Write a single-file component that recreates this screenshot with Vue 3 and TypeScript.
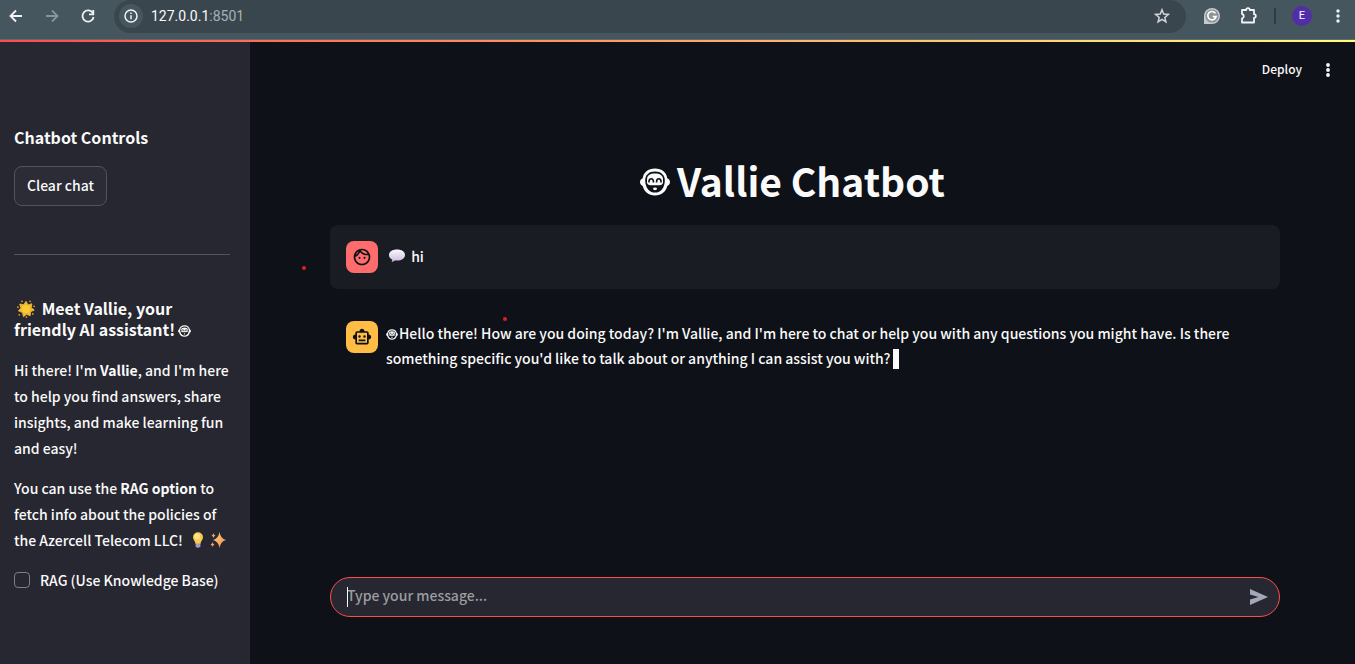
<script setup lang="ts">
import { ref } from 'vue'

const draft = ref('')
const useRag = ref(false)
const showGreeting = ref(true)

function clearChat() {
  showGreeting.value = false
}

function send() {
  draft.value = ''
}
</script>

<template>
  <svg class="defs" aria-hidden="true">
    <symbol id="vallie-face" viewBox="0 0 30 28">
      <path d="M15 .5C22 .5 26.600 4.600 27.300 10.200c1.800.7 2.700 2.200 2.700 3.900s-.9 3.200-2.700 3.900C26 23.600 21.500 27.500 15 27.500S4 23.600 2.700 18C.9 17.300 0 15.800 0 14.100s.9-3.200 2.700-3.900C3.400 4.600 8 .5 15 .5Z" fill="currentColor" />
      <path d="M15 3.600c6 0 9.800 3.400 9.800 8.800 0 7-4 12.200-9.800 12.200S5.200 19.400 5.200 12.400C5.200 7 9 3.600 15 3.600Z" class="face-hole" />
      <path d="M7 11.500C7 7.500 10 5.600 15 5.600s8 1.900 8 5.900v2.700c0 2-1.500 3-3.500 3h-9c-2 0-3.500-1-3.500-3Z" fill="currentColor" />
      <path d="M9 14.500v-1.300c.4-3.200 4-3.200 4.400 0v1.300M16.600 14.500v-1.300c.4-3.200 4-3.200 4.400 0v1.300" class="face-line" />
      <ellipse cx="15" cy="20.800" rx="2" ry="1.400" fill="currentColor" />
    </symbol>
  </svg>

  <div class="window">
    <header class="browser">
      <button class="tool back" aria-label="Back">
        <svg width="16" height="16" viewBox="0 0 16 16"><path d="M14 8H3M8 2.500 2.500 8 8 13.500" /></svg>
      </button>
      <button class="tool forward" aria-label="Forward">
        <svg width="16" height="16" viewBox="0 0 16 16"><path d="M2 8h11M8 2.500 13.500 8 8 13.500" /></svg>
      </button>
      <button class="tool reload" aria-label="Reload">
        <svg width="16" height="16" viewBox="0 0 16 16"><path d="M13 5.300A5.600 5.600 0 1 0 13.600 9" /><path d="M13.300 2v4.300H9" /></svg>
      </button>
      <div class="address">
        <button class="info" aria-label="Site information">
          <svg width="14" height="14" viewBox="0 0 14 14"><circle cx="7" cy="7" r="6" /><path d="M7 6.300V10.300M7 3.600V5" /></svg>
        </button>
        <span class="url">127.0.0.1<span class="port">:8501</span></span>
        <button class="star" aria-label="Bookmark">
          <svg width="16" height="16" viewBox="0 0 16 16"><path d="m8 1.800 1.700 4.300 4.600.3-3.500 3 1.100 4.500L8 11.400l-3.900 2.500 1.100-4.500-3.500-3 4.600-.3Z" /></svg>
        </button>
      </div>
      <button class="tool grammar" aria-label="Grammar">
        <svg width="16" height="16" viewBox="0 0 16 16"><path d="M8 0a8 8 0 1 1 0 16H0V8a8 8 0 0 1 8-8Z" fill="#c5c9cb" stroke="none" /><circle cx="8" cy="8" r="6.600" fill="#8d9598" stroke="none" /><path d="M11.500 5.300A4.200 4.200 0 1 0 12.100 8.600H8.800" stroke="#fff" stroke-width="1.600" fill="none" /></svg>
      </button>
      <button class="tool puzzle" aria-label="Extensions">
        <svg width="18" height="18" viewBox="0 0 18 18"><path d="M2 3h4.200a1.800 1.800 0 0 1 3.600 0H14v4.200a1.800 1.800 0 0 1 0 3.600V15.500H2v-4a2.300 2.300 0 0 0 0-4.500Z" stroke-linejoin="round" /></svg>
      </button>
      <span class="divider"></span>
      <button class="profile" aria-label="Profile">E</button>
      <button class="tool dots" aria-label="Browser menu">
        <svg width="4" height="16" viewBox="0 0 4 16"><circle cx="2" cy="3" r="1.700" /><circle cx="2" cy="8" r="1.700" /><circle cx="2" cy="13" r="1.700" /></svg>
      </button>
    </header>
    <div class="decoration"></div>

    <div class="app">
      <aside class="sidebar">
        <h2>Chatbot Controls</h2>
        <button class="clear" @click="clearChat">Clear chat</button>
        <hr />
        <h3>
          <svg class="emoji sun" viewBox="0 0 20 20"><path d="m10 1.500 2.300 4 4.200-1.300-.7 4.300 3.400 2.700-4.100 1.800-.5 4.500-3.900-1.600-3.500 2.600-1.100-4.500L1.500 12l3-3L3 4.500l4.500.8Z" fill="#efb92f" stroke="#efb92f" stroke-linejoin="round" /><circle cx="10" cy="10" r="4.500" fill="#f9cb3a" /><g fill="#dba32a"><circle cx="5.500" cy="1.500" r="1" /><circle cx="14.500" cy="1.500" r="1" /><circle cx="19" cy="7" r="1" /><circle cx="17.500" cy="15.500" r="1" /><circle cx="10.500" cy="19" r="1" /><circle cx="2.500" cy="16.500" r="1" /><circle cx="1" cy="8" r="1" /></g></svg>
          Meet Vallie, your<br />friendly AI assistant!<svg class="face face-heading"><use href="#vallie-face" /></svg>
        </h3>
        <p>Hi there! I'm <b>Vallie</b>, and I'm here<br />to help you find answers, share<br />insights, and make learning fun<br />and easy!</p>
        <p>
          You can use the <b>RAG option</b> to<br />fetch info about the policies of<br />the Azercell Telecom LLC!
          <svg class="emoji bulb" viewBox="0 0 16 16"><path d="M8 .3a5 5 0 0 0-5 5C3 8 5.300 9 5.600 12h4.800C10.700 9 13 8 13 5.300a5 5 0 0 0-5-5Z" fill="#ffc84a" /><ellipse cx="7.200" cy="4.500" rx="2.800" ry="3" fill="#ffe58b" /><path d="M5.600 11.500h4.800v2.700L9 15.800H7l-1.400-1.600Z" fill="#a995bd" /></svg>
          <svg class="emoji sparkle" viewBox="0 0 16 16"><defs><linearGradient id="spark" x1="0" y1="0" x2="1" y2="1"><stop offset="0" stop-color="#ffd27a" /><stop offset="1" stop-color="#f28b4b" /></linearGradient></defs><path d="M9.500 0Q10.500 6.500 16 8q-5.500 1.500-6.500 8Q8.500 9.500 3 8 8.500 6.500 9.500 0Z" fill="url(#spark)" /><path d="M3.500 1q.4 2 2 2.500-1.600.5-2 2.500-.4-2-2-2.500 1.600-.5 2-2.500ZM2.500 10q.4 2 2 2.500-1.600.5-2 2.500-.4-2-2-2.500 1.600-.5 2-2.500Z" fill="#f3a06a" /></svg>
        </p>
        <label class="rag"><input v-model="useRag" type="checkbox" /><span>RAG (Use Knowledge Base)</span></label>
      </aside>

      <main class="main">
        <nav class="top">
          <button class="deploy">Deploy</button>
          <button class="menu" aria-label="Main menu">
            <svg width="4" height="14" viewBox="0 0 4 14"><circle cx="2" cy="2" r="1.900" /><circle cx="2" cy="7" r="1.900" /><circle cx="2" cy="12" r="1.900" /></svg>
          </button>
        </nav>
        <h1><svg class="face face-title"><use href="#vallie-face" /></svg>Vallie Chatbot</h1>

        <section class="message user">
          <i class="mark mark-left"></i>
          <span class="avatar avatar-user">
            <svg width="20" height="20" viewBox="0 0 24 24"><path d="M10.250 13a1.250 1.250 0 1 1-2.500 0 1.250 1.250 0 0 1 2.500 0ZM15 11.750a1.250 1.250 0 1 0 0 2.500 1.250 1.250 0 0 0 0-2.500ZM22 12c0 5.520-4.480 10-10 10S2 17.520 2 12 6.480 2 12 2s10 4.480 10 10ZM10.660 4.120C12.060 6.440 14.600 8 17.500 8c.46 0 .91-.05 1.340-.12C17.440 5.560 14.900 4 12 4c-.46 0-.91.050-1.340.12ZM4.420 9.470a8.046 8.046 0 0 0 3.660-4.440 8.046 8.046 0 0 0-3.660 4.440ZM20 12c0-.78-.12-1.530-.33-2.240-.7.150-1.420.24-2.170.24a9.974 9.974 0 0 1-7.760-3.690A10.016 10.016 0 0 1 4 11.860c.010.040 0 .090 0 .140 0 4.410 3.590 8 8 8s8-3.590 8-8Z" /></svg>
          </span>
          <p>
            <svg class="emoji speech" viewBox="0 0 18 16"><defs><linearGradient id="bubble" x1="0" y1="0" x2="0" y2="1"><stop offset="0" stop-color="#fbf8ff" /><stop offset="1" stop-color="#c9bddd" /></linearGradient></defs><path d="M9 1.500c4.700 0 8 2.200 8 5.500s-3.300 5.600-8 5.600c-.9 0-1.700 0-2.400-.2-.8.900-2 1.500-3.200 1.400.7-.6 1-1.300.9-2.100C2.200 10.700 1 9.100 1 7c0-3.300 3.300-5.500 8-5.500Z" fill="url(#bubble)" /></svg>
            hi
          </p>
        </section>

        <section v-if="showGreeting" class="message">
          <i class="mark mark-top"></i>
          <span class="avatar avatar-bot">
            <svg width="20" height="20" viewBox="0 0 24 24"><path d="M20 9V7c0-1.100-.9-2-2-2h-3c0-1.660-1.340-3-3-3S9 3.340 9 5H6c-1.100 0-2 .9-2 2v2c-1.660 0-3 1.340-3 3s1.340 3 3 3v4c0 1.100.9 2 2 2h12c1.100 0 2-.9 2-2v-4c1.660 0 3-1.340 3-3s-1.340-3-3-3Zm-2 10H6V7h12v12ZM9 13a1.500 1.500 0 1 1 0-3 1.500 1.500 0 0 1 0 3Zm7.500-1.500a1.500 1.500 0 1 1-3 0 1.500 1.500 0 0 1 3 0ZM8 15h8v2H8v-2Z" /></svg>
          </span>
          <p><svg class="face face-small"><use href="#vallie-face" /></svg>Hello there! How are you doing today? I'm Vallie, and I'm here to chat or help you with any questions you might have. Is there<br />something specific you'd like to talk about or anything I can assist you with?<span class="cursor"></span></p>
        </section>

        <form class="composer" @submit.prevent="send">
          <i class="caret"></i>
          <input v-model="draft" type="text" placeholder="Type your message..." aria-label="Message" />
          <button type="submit" aria-label="Send">
            <svg width="18" height="16" viewBox="0 0 18 16"><path d="M0 0 18 8 0 16V10.500L8.500 8 0 5.500Z" /></svg>
          </button>
        </form>
      </main>
    </div>
  </div>
</template>

<style>
body {
  margin: 0;
  background: #0e1117;
}
</style>

<style scoped>
* {
  box-sizing: border-box;
}
.defs {
  position: absolute;
  width: 0;
  height: 0;
}
.window {
  display: flex;
  flex-direction: column;
  min-height: 100vh;
  font: 500 14px/26px "Noto Sans CJK SC", "Noto Sans", sans-serif;
  color: #fafafa;
  background: #0e1117;
}
button {
  display: flex;
  align-items: center;
  justify-content: center;
  padding: 0;
  border: 0;
  background: none;
  color: inherit;
  font: inherit;
}
b {
  font-weight: 700;
}
.browser {
  display: flex;
  align-items: center;
  height: 40px;
  padding: 0 9px 7px 8px;
  background: #46565f;
  border-bottom: 1px solid #5c6a72;
}
.tool {
  width: 16px;
  height: 32px;
}
.tool svg,
.info svg,
.star svg {
  fill: none;
  stroke: #f1f3f4;
  stroke-width: 1.8;
}
.tool.forward svg {
  stroke: #8a959b;
}
.forward,
.reload {
  margin-left: 20px;
}
.address {
  display: flex;
  flex: 1;
  align-items: center;
  height: 33px;
  margin: 0 18px;
  padding: 0 16px 0 5px;
  border-radius: 17px;
  background: #3a464e;
}
.info {
  width: 24px;
  height: 24px;
  border-radius: 50%;
  background: #46565f;
}
.info svg {
  stroke-width: 1.5;
}
.url {
  flex: 1;
  margin-left: 8px;
  font: 14px/20px "Open Sans", sans-serif;
  font-family: Roboto, sans-serif;
}
.port {
  color: #a9b1b6;
}
.star svg {
  stroke: #d0d5d8;
  stroke-width: 1.5;
}
.puzzle {
  width: 18px;
  margin-left: 20px;
}
.divider {
  width: 2px;
  height: 16px;
  margin-left: 16px;
  background: #303c43;
}
.profile {
  width: 20px;
  height: 20px;
  margin-left: 16px;
  border-radius: 50%;
  background: #512da8;
  font: 11px/20px Roboto, sans-serif;
}
.dots {
  margin-left: 18px;
}
.tool.dots svg {
  fill: #f1f3f4;
  stroke: none;
}
.decoration {
  height: 2px;
  background: linear-gradient(90deg, #ff4b4b, #fffd80);
}
.app {
  display: flex;
  flex: 1;
}
.sidebar {
  width: 250px;
  flex-shrink: 0;
  padding: 83px 20px 0 14px;
  background: #262730;
  white-space: nowrap;
}
h1,
h2,
h3,
p {
  margin: 0;
}
h2 {
  font-size: 16px;
  font-weight: 500;
  line-height: 24px;
}
.clear {
  width: 93px;
  height: 40px;
  margin-top: 17px;
  padding-bottom: 2px;
  border: 1px solid #52535b;
  border-radius: 8px;
  background: #2b2c36;
}
hr {
  height: 1px;
  margin: 48px 0 43px;
  border: 0;
  background: #52535b;
}
h2,
h3 {
  font-weight: 700;
}
h3 {
  font-size: 16px;
  line-height: 21px;
}
.sidebar p {
  margin-top: 17px;
}
.sidebar p + p {
  margin-top: 14px;
}
.emoji {
  width: 16px;
  height: 16px;
  vertical-align: -2px;
}
.sun {
  width: 18px;
  height: 18px;
  margin: 0 3px;
  vertical-align: -3px;
}
.bulb {
  margin: 0 2px 0 4px;
}
.sparkle {
  margin-left: 2px;
}
.face {
  color: #fafafa;
}
.face-hole {
  fill: #0e1117;
}
.face-line {
  fill: none;
  stroke: #0e1117;
  stroke-width: 1.6;
}
.face-heading {
  width: 13px;
  height: 12px;
  margin-left: 3px;
  vertical-align: -1px;
}
.rag {
  display: flex;
  align-items: center;
  gap: 10px;
  margin-top: 14px;
}
.rag input {
  appearance: none;
  width: 16px;
  height: 16px;
  margin: 0;
  border: 1px solid #7d7e86;
  border-radius: 4px;
}
.rag input:checked {
  background: #ff4b4b;
}
.main {
  display: flex;
  flex: 1;
  flex-direction: column;
  min-width: 0;
  padding: 0 75px 47px 80px;
}
.top {
  display: flex;
  align-items: center;
  justify-content: flex-end;
  gap: 24px;
  height: 56px;
  margin-right: -50px;
}
.deploy {
  padding-bottom: 2px;
  font-size: 12px;
}
.menu svg {
  fill: #fafafa;
}
h1 {
  display: flex;
  align-items: center;
  justify-content: center;
  gap: 6px;
  margin-top: 56px;
  padding-right: 26px;
  font-size: 39px;
  font-weight: 700;
  line-height: 52px;
}
.face-title {
  width: 32px;
  height: 28px;
  margin-top: 3px;
}
.message {
  position: relative;
  display: flex;
  gap: 8px;
  margin-bottom: 16px;
  padding: 16px;
  border-radius: 8px;
}
.user {
  margin-top: 19px;
  background: #1a1c24;
}
.avatar {
  display: flex;
  flex-shrink: 0;
  align-items: center;
  justify-content: center;
  width: 32px;
  height: 32px;
  border-radius: 8px;
}
.avatar svg {
  fill: #0e1117;
}
.avatar-user {
  background: #ff6c6c;
}
.avatar-bot {
  background: #ffbd45;
}
.message p {
  line-height: 25px;
}
.user p {
  line-height: 30px;
}
.speech {
  width: 18px;
  margin: 0 2px;
}
.face-small {
  width: 12px;
  height: 11px;
  margin-right: 1px;
  vertical-align: -1px;
}
.cursor {
  display: inline-block;
  width: 6px;
  height: 20px;
  margin-left: 3px;
  background: #fafafa;
  vertical-align: -5px;
}
.mark {
  position: absolute;
  width: 4px;
  height: 4px;
  border-radius: 50%;
  background: #e0201f;
}
.mark-left {
  left: -28px;
  top: 41px;
}
.mark-top {
  left: 173px;
  top: 12px;
}
.composer {
  position: relative;
  display: flex;
  align-items: center;
  height: 40px;
  margin-top: auto;
  padding: 0 11px 0 16px;
  border: 1px solid #ff4b4b;
  border-radius: 20px;
  background: #262730;
}
.composer input {
  flex: 1;
  min-width: 0;
  padding: 0 0 4px;
  border: 0;
  outline: 0;
  background: none;
  color: #fafafa;
  font: inherit;
}
.composer input::placeholder {
  color: #9c9ca1;
  opacity: 1;
}
.composer svg {
  fill: #a3a8b8;
}
.caret {
  position: absolute;
  left: 16px;
  top: 9px;
  width: 1px;
  height: 20px;
  background: #fafafa;
}
</style>
